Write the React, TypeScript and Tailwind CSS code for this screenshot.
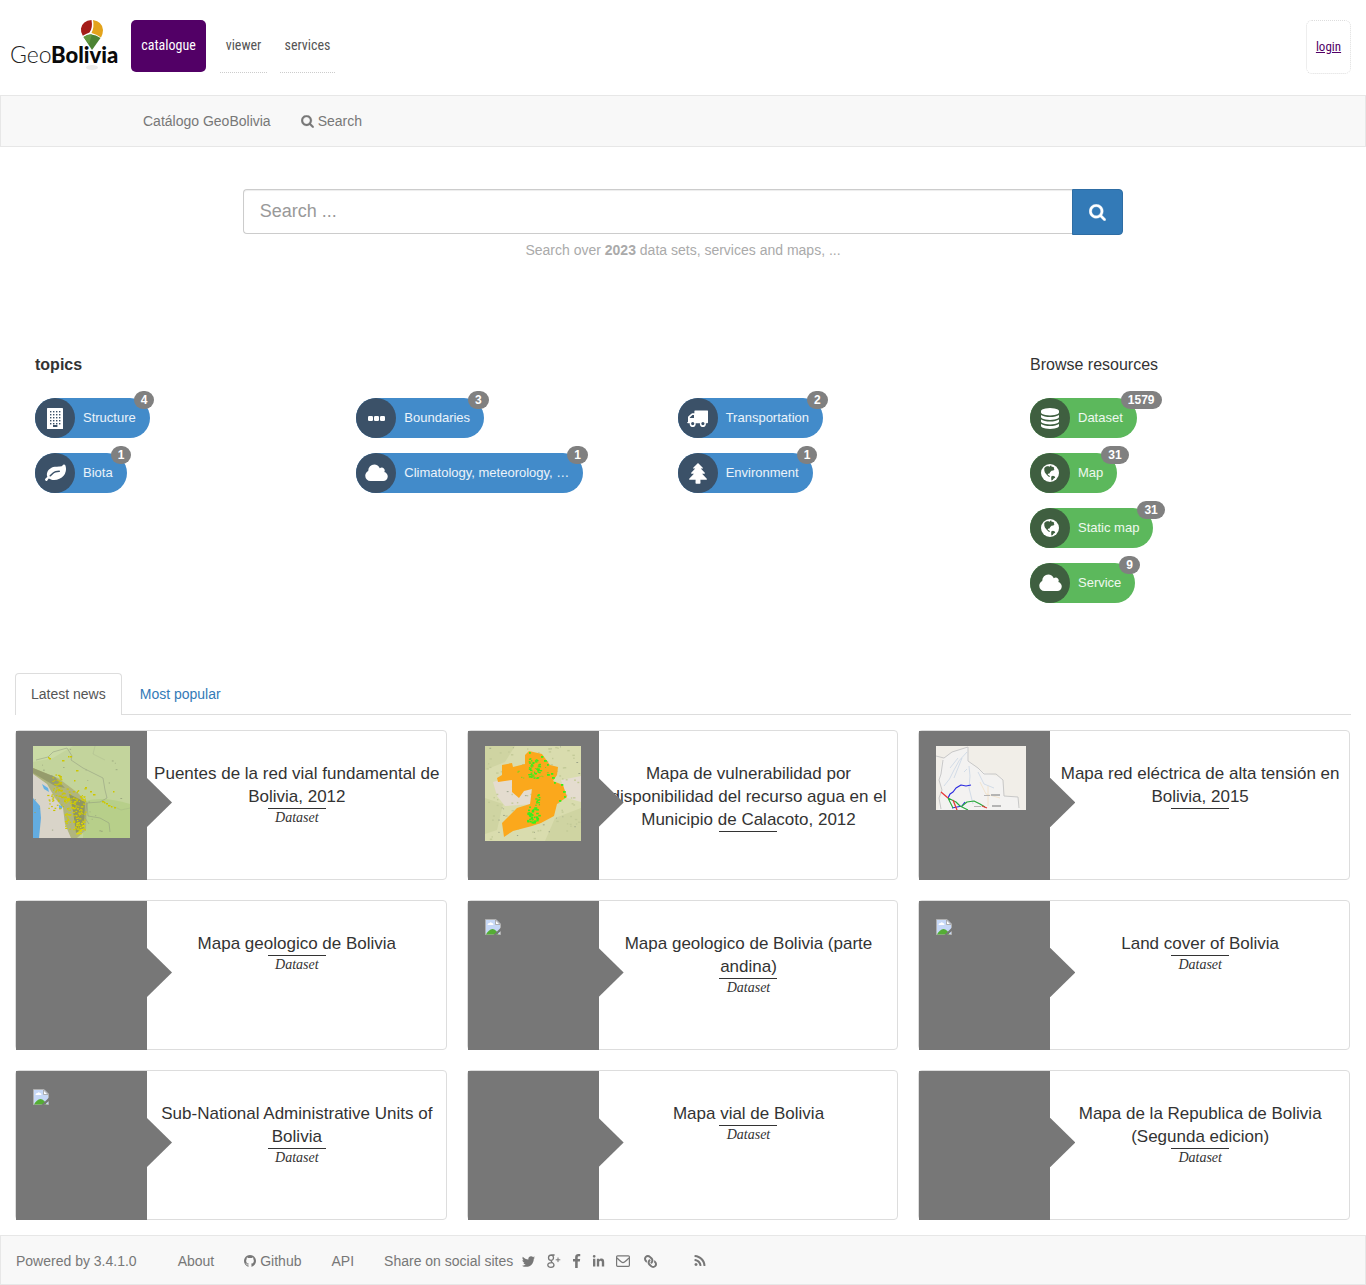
import React from "react";
import { FaLink, FaLinkedinIn } from "react-icons/fa";

const SANS = "font-['Liberation_Sans',Arial,sans-serif]";
const NARROW = "font-['Liberation_Sans_Narrow','Roboto_Condensed','Liberation_Sans',sans-serif]";

type IconProps = { className?: string };

function Glyph({ d, x = 0, w = 1792, className }: { d: string; x?: number; w?: number; className?: string }) {
  return (
    <svg viewBox={`${x} 0 ${w} 1792`} fill="currentColor" aria-hidden="true" className={className}>
      <path d={d} />
    </svg>
  );
}

const P = {
  search:
    "M1216 832q0-185-131.5-316.5t-316.5-131.5-316.5 131.5-131.5 316.5 131.5 316.5 316.5 131.5 316.5-131.5 131.5-316.5zm512 832q0 52-38 90t-90 38q-54 0-90-38l-343-342q-179 124-399 124-143 0-273.5-55.5t-225-150-150-225-55.5-273.5 55.5-273.5 150-225 225-150 273.5-55.5 273.5 55.5 225 150 150 225 55.5 273.5q0 220-124 399l343 343q37 37 37 90z",
  twitter:
    "M1684 408q-67 98-162 167 1 14 1 42 0 130-38 259.5t-115.5 248.5-184.5 210.5-258 146-323 54.5q-271 0-496-145 35 4 78 4 225 0 401-138-105-2-188-64.5t-114-159.5q33 5 61 5 43 0 85-11-112-23-185.5-111.5t-73.5-205.5v-4q68 38 146 41-66-44-105-115t-39-154q0-88 44-163 121 149 294.5 238.5t371.5 99.5q-8-38-8-74 0-134 94.5-228.5t228.5-94.5q140 0 236 102 109-21 205-78-37 115-142 178 93-10 186-50z",
  cloud:
    "M1984 1152q0 159-112.5 271.5t-271.5 112.5h-1088q-185 0-316.5-131.5t-131.5-316.5q0-132 71-241.5t187-163.5q-2-28-2-43 0-212 150-362t362-150q158 0 286.5 88t187.5 230q70-62 166-62 106 0 181 75t75 181q0 75-41 138 129 30 213 134.5t84 239.5z",
  facebook:
    "M1343 12v264h-157q-86 0-116 36t-30 108v189h293l-39 296h-254v759h-306v-759h-255v-296h255v-218q0-186 104-288.5t277-102.5q147 0 228 12z",
  rss: "M576 1344q0 80-56 136t-136 56-136-56-56-136 56-136 136-56 136 56 56 136zm512 123q2 28-17 48-18 21-47 21h-135q-25 0-43-16.5t-20-41.5q-22-229-184.5-391.5t-391.5-184.5q-25-2-41.5-20t-16.5-43v-135q0-29 21-47 17-17 43-17h5q160 13 306 80.5t259 181.5q114 113 181.5 259t80.5 306zm512 2q2 27-18 47-18 20-46 20h-143q-26 0-44.5-17.5t-19.5-42.5q-12-215-101-408.5t-231.5-336-336-231.5-408.5-102q-25-1-42.5-19.5t-17.5-43.5v-143q0-28 20-46 18-18 44-18h3q262 13 501.5 120t425.5 294q187 186 294 425.5t120 501.5z",
  database:
    "M896 768q237 0 443-43t325-127v170q0 69-103 128t-280 93.5-385 34.5-385-34.5-280-93.5-103-128v-170q119 84 325 127t443 43zm0 768q237 0 443-43t325-127v170q0 69-103 128t-280 93.5-385 34.5-385-34.5-280-93.5-103-128v-170q119 84 325 127t443 43zm0-384q237 0 443-43t325-127v170q0 69-103 128t-280 93.5-385 34.5-385-34.5-280-93.5-103-128v-170q119 84 325 127t443 43zm0-1152q208 0 385 34.5t280 93.5 103 128v128q0 69-103 128t-280 93.5-385 34.5-385-34.5-280-93.5-103-128v-128q0-69 103-128t280-93.5 385-34.5z",
  github:
    "M896 128q209 0 385.5 103t279.5 279.5 103 385.5q0 251-146.5 451.5t-378.5 277.5q-27 5-40-7t-13-30q0-3 .5-76.5t.5-134.5q0-97-52-142 57-6 102.5-18t94-39 81-66.5 53-105 20.5-150.5q0-119-79-206 37-91-8-204-28-9-81 11t-92 44l-38 24q-93-26-192-26t-192 26q-16-11-42.5-27t-83.5-38.5-85-13.5q-45 113-8 204-79 87-79 206 0 85 20.5 150t52.5 105 80.5 67 94 39 102.5 18q-39 36-49 103-21 10-45 15t-57 5-65.5-21.5-55.5-62.5q-19-32-48.5-52t-49.5-24l-20-3q-21 0-29 4.5t-5 11.5 9 14 13 12l7 5q22 10 43.5 38t31.5 51l10 23q13 38 44 61.5t67 30 69.5 7 55.5-3.5l23-4q0 38 .5 88.5t.5 54.5q0 18-13 30t-40 7q-232-77-378.5-277.5t-146.5-451.5q0-209 103-385.5t279.5-279.5 385.5-103z",
  leaf: "M1280 704q0-26-19-45t-45-19q-172 0-318 49.5t-259.5 134-235.5 219.5q-19 21-19 45 0 26 19 45t45 19q24 0 45-19 27-24 74-71t67-66q137-124 268.5-176t313.5-52q26 0 45-19t19-45zm512-198q0 95-20 193-46 224-184.5 383t-357.5 268q-214 108-438 108-148 0-286-47-15-5-88-42t-96-37q-16 0-39.5 32t-45 70-52.5 70-60 32q-43 0-63.5-17.5t-45.5-59.5q-2-4-6-11t-5.5-10-3-9.5-1.5-13.5q0-35 31-73.5t68-65.5 68-56 31-48q0-4-14-38t-16-44q-9-51-9-104 0-115 43.5-220t119-184.5 170.5-139 204-95.5q55-18 145-25.5t179.5-9 178.5-6 163.5-24 113.5-56.5l29.5-29.5 29.5-28 27-20 36.5-16 43.5-4.5q39 0 70.5 46t47.5 112 24 124 8 96z",
};

function SearchIcon({ className }: IconProps) {
  return (
    <svg viewBox="50 110 1692 1700" fill="currentColor" stroke="currentColor" strokeWidth="30" aria-hidden="true" className={className}>
      <path d={P.search} />
    </svg>
  );
}

function Building({ className }: IconProps) {
  const cols = [3, 6, 9, 12];
  const rows = [3, 6, 9, 12, 15];
  return (
    <svg viewBox="0 0 16 21" className={className} aria-hidden="true">
      <rect width="16" height="21" rx="0.6" fill="currentColor" />
      <g fill="#3b5168">
        {rows.map((y) => cols.map((x) => <rect key={`${x}-${y}`} x={x} y={y} width="1.4" height="1.4" />))}
        <rect x="6" y="17" width="4.4" height="2" />
      </g>
    </svg>
  );
}

function Dots({ className }: IconProps) {
  return (
    <svg viewBox="0 0 17 5" fill="currentColor" className={className} aria-hidden="true">
      <rect width="5" height="5" rx="1.2" />
      <rect x="6" width="5" height="5" rx="1.2" />
      <rect x="12" width="5" height="5" rx="1.2" />
    </svg>
  );
}

function Truck({ className }: IconProps) {
  return (
    <svg viewBox="0 0 21 17" className={className} aria-hidden="true">
      <path
        fill="currentColor"
        fillRule="evenodd"
        d="M8 .5h12.500q.5 0 .5.500V12.500q0 .8-.8.8h-1.400a3 3 0 1 1-5.800 0H8.600a3 3 0 1 1-5.800 0H1q-.9 0-.9-.7 0-.5.9-.5V7.400q0-.7.5-1.200L4.300 3.700q.5-.4 1.100-.4h2V1q0-.5.600-.5zM7 5H5.400L2.800 7.600V8H7zM5.700 12a1.600 1.600 0 1 0 0 3.200 1.600 1.600 0 0 0 0-3.200zm10.200 0a1.600 1.600 0 1 0 0 3.200 1.600 1.600 0 0 0 0-3.200z"
      />
    </svg>
  );
}

function Pine({ className }: IconProps) {
  return (
    <svg viewBox="0 0 18 21" className={className} aria-hidden="true">
      <path
        fill="currentColor"
        d="M9 0 4.200 4.800q-.5.700.4.700h1.600L2.200 9.800q-.5.900.4.900h2.300L.2 15.700q-.5 1 .5 1h5.900L6.500 20q0 .8.800.8h3.400q.8 0 .8-.8l-.1-3.300h5.900q1 0 .5-1l-4.700-5h2.300q.9 0 .4-.9l-4-4.300h1.600q.9 0 .4-.7z"
      />
    </svg>
  );
}

function Globe({ className }: IconProps) {
  return (
    <svg viewBox="0 0 18 18" className={className} aria-hidden="true">
      <circle cx="9" cy="9" r="9" fill="currentColor" />
      <path
        fill="#3f5f40"
        d="M3.300 3.900 5 2.500l2.400-.6.700 1 1.400-1.300 1.500.3-.8 1.200 1.700-.3 1.300.9-.4 1.500.8.600-1.500.8-1.600.2-1.400 1.500-.6 1.200-1.500.2-.2 1.400 1.200.2.800 1 .1.700-1.500-.5L5.500 10.600 3.900 8.600 3.300 6.500zM10.200 12.400l1.700-.6 1.900.7.400 1.300-1.500.8-1 1.500-1.300.5-.2-2z"
      />
    </svg>
  );
}

function GooglePlus({ className }: IconProps) {
  return (
    <svg viewBox="0 0 14 14" fill="none" stroke="currentColor" className={className} aria-hidden="true">
      <path
        strokeWidth="1.300"
        d="M7.600 1H4.700C2.800 1 1.500 2.200 1.500 3.800S2.700 6.400 4.100 6.400 6.500 5.300 6.500 3.800 5.700 1.200 4.700 1M4.500 6.400c-.6.800-.3 1.300.5 1.900 1 .7 2 1.300 2 2.600 0 1.500-1.300 2.400-3.100 2.400S.8 12.500.8 11.100 2.200 8.700 5 8.600"
      />
      <path strokeWidth="1" d="M11 3.500v4.600M8.700 5.800h4.600" />
    </svg>
  );
}

function Envelope({ className }: IconProps) {
  return (
    <svg viewBox="0 0 14 12" fill="none" stroke="currentColor" strokeWidth="1.200" className={className} aria-hidden="true">
      <rect x=".6" y=".8" width="12.800" height="10.500" rx="1" />
      <path d="M1 3q2 2 4.500 4Q7 8.300 8.500 7 11 5 13 3" />
    </svg>
  );
}

function Logo() {
  return (
    <svg viewBox="0 0 108 54" className="h-[54px] w-[108px]" role="img" aria-label="GeoBolivia">
      <ellipse cx="82" cy="49.500" rx="6" ry="2.500" fill="#ececec" />
      <path d="M81.500 2Q83 10 79.500 14.500 76 16 72.800 17.800 70.500 14 71 10.500 72.500 2.500 81.500 2z" fill="#a51c18" />
      <path d="M83 2Q92.500 3.500 93 12q0 3.500-2 7.500-4.500-3.500-9.500-4.500Q84.500 9 83 2z" fill="#e3a31b" />
      <g fontFamily="Lato, sans-serif">
        <text x="0" y="45" fontSize="23" fontWeight="300" fill="#222">Geo</text>
        <text x="41" y="45" fontSize="22" fontWeight="900" fill="#0a0a0a">Bolivia</text>
      </g>
      <path d="M82 32 73.500 19Q82 13.500 90.500 20z" fill="#4c8333" />
      <path d="M79 26 73.500 19Q78 15.500 82 16.500z" fill="#63993f" />
    </svg>
  );
}

function scatter(seed: number, n: number, x: number, y: number, w: number, h: number): [number, number][] {
  let s = seed;
  const next = () => {
    s = (s * 16807) % 2147483647;
    return s / 2147483647;
  };
  return Array.from({ length: n }, () => [x + next() * w, y + next() * h]);
}

function Specks({ pts, fill, size = 1.2 }: { pts: [number, number][]; fill: string; size?: number }) {
  return (
    <g fill={fill}>
      {pts.map(([x, y], i) => (
        <rect key={i} x={x} y={y} width={size + (i % 3) * 0.5} height={size} />
      ))}
    </g>
  );
}

function BridgesMap() {
  return (
    <svg viewBox="0 0 97 92" className="block h-[92px] w-[97px]" role="img" aria-label="Puentes de la red vial">
      <rect width="97" height="92" fill="#c3d49c" />
      <path d="M52 55Q70 50 97 58V92H50z" fill="#b7cf8a" />
      <path d="M0 0h40L20 12 0 16z" fill="#cbdba6" />
      <path d="M0 22 25 32 45 47 54 56 53 84 44 92H26L20 58 0 34z" fill="#b0b57e" />
      <path d="M0 22 22 31 32 42 22 40 0 27z" fill="#969c6c" />
      <path d="M36 48 52 56 51 82 43 87 40 65z" fill="#8f9661" />
      <path d="M0 28 14 38 22 52 30 62 32 78 38 92H0z" fill="#d9d4c9" />
      <path d="M0 52 7 60 8 72 6 92H0z" fill="#63ace0" />
      <path d="M9 38 15 42 16 46 11 43zM26 59l3 1v3l-3-1z" fill="#65b1e3" />
      <g fill="none" stroke="#8d967e" strokeWidth=".5">
        <path d="M3 14 15 11 20 6 34 2 39 10 38 14 50 22 60 27 70 32 72 44 74 52 67 56 54 57 52 72 56 78M54 57 55 70 67 72 76 77 77 86" />
        <path d="M62 0 60 8 72 14M80 60 88 64 97 62" strokeOpacity=".4" />
      </g>
      <Specks pts={scatter(7007, 24, 1, 2, 90, 88)} fill="#95a07a" size={0.8} />
      <Specks pts={scatter(120012, 30, 19, 28, 9, 18)} fill="#cdc700" />
      <Specks pts={scatter(330033, 40, 14, 42, 38, 14)} fill="#cdc700" />
      <Specks pts={scatter(510051, 110, 31, 50, 21, 34)} fill="#d3cd00" />
      <Specks pts={scatter(770077, 22, 43, 74, 7, 14)} fill="#e0da00" />
      <Specks pts={scatter(910091, 16, 14, 48, 18, 18)} fill="#c9c400" />
      <Specks
        pts={[[15, 11], [16, 12], [29, 14], [35, 10], [37, 10], [43, 24], [41, 34], [57, 45], [60, 48], [80, 45], [52, 41], [69, 55], [71, 56], [73, 57], [75, 59], [78, 60], [81, 61]]}
        fill="#cdc700"
        size={1.5}
      />
    </svg>
  );
}

function WaterMap() {
  return (
    <svg viewBox="0 0 96 95" className="block h-[95px] w-[96px]" role="img" aria-label="Mapa de vulnerabilidad">
      <rect width="96" height="95" fill="#d9dcae" />
      <path d="M0 0h30L20 16 0 24zM70 72l26-10v33H60zM0 52l18 6-6 26-12 4z" fill="#cfd4a2" />
      <path d="M8 36 30 30 46 42 48 58 20 60 12 50zM76 34l20-4v26l-14-4z" fill="#e4dccf" />
      <Specks pts={scatter(500005, 110, 0, 0, 94, 93)} fill="#c3ca98" size={1.4} />
      <Specks pts={scatter(450045, 26, 0, 0, 94, 93)} fill="#8f9880" size={0.8} />
      <path
        d="M17 19 27 17 28 21 40 18 40 9 44 5 57 8 65 19 73 21 72 29 68 35 78 39 82 51 72 58 69 70 56 77 47 80 28 85 19 91 17 77 32 62 45 58 47 43 39 45 34 52 27 46 27 34 13 36 12 32 17 29z"
        fill="#fba81c"
      />
      <Specks pts={scatter(190019, 50, 43, 12, 12, 20)} fill="#35f01c" size={1.3} />
      <Specks pts={scatter(230023, 42, 42, 60, 12, 16)} fill="#35f01c" size={1.6} />
      <Specks pts={scatter(610061, 12, 50, 48, 4, 12)} fill="#35f01c" size={1.3} />
      <Specks pts={scatter(830083, 16, 32, 20, 30, 16)} fill="#7ed41c" size={1} />
      <Specks
        pts={[[44, 6], [56, 10], [59, 14], [62, 18], [66, 27], [67, 31], [69, 36], [76, 38], [78, 45], [79, 50], [74, 54], [62, 28]]}
        fill="#35f01c"
        size={1.8}
      />
    </svg>
  );
}

function PowerMap() {
  return (
    <svg viewBox="0 0 90 64" className="block h-[64px] w-[90px]" role="img" aria-label="Mapa red eléctrica">
      <rect width="90" height="64" fill="#f1eee8" />
      <path d="M6 14 16 6 32 1 33 16 47 26 66 32 68 50 82 51 84 64H2L6 46 3 30z" fill="#f3f2f1" />
      <g fill="none" strokeLinejoin="round">
        <path d="M0 10 8 12 16 6 32 1 32 15 42 22 48 28 60 28 67 34 68 50 82 51 83 62M7 14 5 28 3 34 6 44 3 52 5 63" stroke="#c8c8c8" />
        <path d="M31 6Q22 14 18 24T8 40M33 20 34 30 33 42 37 58M22 12 14 22M42 26l6 12 10 4M28 26l3-3M26 12l-8 20" stroke="#c9d6e4" strokeWidth=".8" />
        <path d="M44 36 50 48 64 52M52 40v20" stroke="#f1dfc4" strokeWidth=".8" />
        <path d="M35 39 30 40 25 39 20 42 17 46 14 48 12 52M16 62 26 60 29 56" stroke="#2a2ae0" strokeWidth="1.200" />
        <path d="M12 52 20 56 24 60 32 64M26 60 31 56 38 55 44 58 49 61M12 52l5 10" stroke="#27a83a" strokeWidth="1.100" />
        <path d="M5 46 12 52M17 54l4 10M46 60l5 2" stroke="#e8383a" strokeWidth="1.300" />
      </g>
      <path d="M48 49h6v1h-6zM55 48h9v2h-9zM56 59h9v2h-9zM38 60h7v1h-7z" fill="#b4b4b4" />
    </svg>
  );
}

function BrokenImage() {
  return (
    <svg viewBox="0 0 16 16" className="mt-[3px] block size-4" aria-hidden="true">
      <path d="M.5.500H11L15.500 5v10.500H.5z" fill="#c6d8f7" stroke="#b0b0b0" />
      <path d="M1 15.500Q3.500 10.500 7.500 10q4 .5 6 5.500z" fill="#55ad35" />
      <path d="M2.500 6q0-2 2-2 1-1.500 2.500 0 1.500.2 1.500 2z" fill="#fff" />
      <path d="M10.500 1v4.500H15z" fill="#fff" stroke="#a0a0a0" strokeWidth=".8" />
      <path d="M16 8.500 8.500 16H11l5-4z" fill="#777" />
    </svg>
  );
}

type PillData = { label: string; count: number; icon: React.ReactNode };

function Pill({ label, count, icon, green }: PillData & { green?: boolean }) {
  return (
    <a
      href="#"
      className={`relative flex h-10 w-fit items-center rounded-full pr-3.5 text-[13px] text-white/90 ${green ? "bg-[#5cb85c]" : "bg-[#428bca]"}`}
    >
      <span className={`flex size-10 shrink-0 items-center justify-center rounded-full text-white ${green ? "bg-[#3f5f40]" : "bg-[#3b5168]"}`}>
        {icon}
      </span>
      <span className="ml-2 whitespace-nowrap">{label}</span>
      <span className="absolute -top-[7px] left-full -ml-4 rounded-[10px] bg-[#808080] px-[7px] text-xs leading-[18px] font-bold text-white">
        {count}
      </span>
    </a>
  );
}

const cloud = <Glyph d={P.cloud} x={64} w={1920} className="h-[21px] w-[23px]" />;

const topics: PillData[] = [
  { label: "Structure", count: 4, icon: <Building className="h-[21px] w-4" /> },
  { label: "Boundaries", count: 3, icon: <Dots className="h-[5px] w-[17px]" /> },
  { label: "Transportation", count: 2, icon: <Truck className="h-[17px] w-[21px]" /> },
  { label: "Biota", count: 1, icon: <Glyph d={P.leaf} className="size-[21px]" /> },
  { label: "Climatology, meteorology, …", count: 1, icon: cloud },
  { label: "Environment", count: 1, icon: <Pine className="h-[21px] w-[18px]" /> },
];

const resources: PillData[] = [
  { label: "Dataset", count: 1579, icon: <Glyph d={P.database} x={128} w={1536} className="h-[21px] w-[18px]" /> },
  { label: "Map", count: 31, icon: <Globe className="size-[18px]" /> },
  { label: "Static map", count: 31, icon: <Globe className="size-[18px]" /> },
  { label: "Service", count: 9, icon: cloud },
];

type CardData = { title: string; type?: string; thumb?: React.ReactNode };

const cards: CardData[] = [
  { title: "Puentes de la red vial fundamental de Bolivia, 2012", type: "Dataset", thumb: <BridgesMap /> },
  { title: "Mapa de vulnerabilidad por disponibilidad del recurso agua en el Municipio de Calacoto, 2012", thumb: <WaterMap /> },
  { title: "Mapa red eléctrica de alta tensión en Bolivia, 2015", thumb: <PowerMap /> },
  { title: "Mapa geologico de Bolivia", type: "Dataset" },
  { title: "Mapa geologico de Bolivia (parte andina)", type: "Dataset", thumb: <BrokenImage /> },
  { title: "Land cover of Bolivia", type: "Dataset", thumb: <BrokenImage /> },
  { title: "Sub-National Administrative Units of Bolivia", type: "Dataset", thumb: <BrokenImage /> },
  { title: "Mapa vial de Bolivia", type: "Dataset" },
  { title: "Mapa de la Republica de Bolivia (Segunda edicion)", type: "Dataset" },
];

function Card({ title, type, thumb }: CardData) {
  return (
    <li className="flex min-h-[150px] rounded border border-[#ddd]">
      <div className="relative -mb-px w-[131px] shrink-0 bg-[#777] pt-[15px] pl-[17px]">
        {thumb}
        <span className="absolute top-[47px] left-full z-10 -ml-0.5 h-[49px] w-[27px] bg-[#777] [clip-path:polygon(0_0,2px_0,100%_50%,2px_100%,0_100%)]" />
      </div>
      <a href="#" className="block min-w-0 flex-1 pt-[31px] pr-1 pl-[5px] text-center text-[#333]">
        <h2 className="text-[17px] leading-[23px]">{title}</h2>
        <div className="mx-auto w-[58px] border-t border-[#333]" />
        {type && (
          <span className="block font-['Liberation_Serif',serif] text-sm leading-[18px] italic">{type}</span>
        )}
      </a>
    </li>
  );
}

export default function App() {
  return (
    <div className={`bg-white text-sm text-[#333] ${SANS}`}>
      <header className={`flex h-[95px] items-start justify-between pt-5 pr-[15px] pl-2.5 ${NARROW}`}>
        <div className="flex items-start">
          <a href="#" className="-mt-0.5 mr-[13px]">
            <Logo />
          </a>
          <nav className="flex items-start text-sm leading-[50px] text-[#555]">
            <a href="#" className="mr-3.5 h-[52px] w-[75px] rounded-[5px] bg-[#520066] text-center text-white">catalogue</a>
            <a href="#" className="mr-[13px] h-[53px] w-[47px] border-b border-dotted border-[#ccc] text-center">viewer</a>
            <a href="#" className="h-[53px] w-[55px] border-b border-dotted border-[#ccc] text-center">services</a>
          </nav>
        </div>
        <a href="#" className="h-[54px] w-[45px] rounded-md border border-dotted border-[#ddd] text-center text-[13px] leading-[51px] text-[#520066] underline">
          login
        </a>
      </header>

      <nav className="flex h-[52px] items-center gap-[30px] border border-[#e7e7e7] bg-[#f8f8f8] pl-[142px] text-[#777]">
        <a href="#">Catálogo GeoBolivia</a>
        <a href="#" className="flex items-center gap-1">
          <SearchIcon className="size-[13px]" />
          Search
        </a>
      </nav>

      <main className="px-[15px]">
        <section className="-mx-[15px] pt-[42px]">
          <div className="mx-auto w-2/3 px-[15px]">
            <form className="flex" onSubmit={(e) => e.preventDefault()}>
              <input
                type="text"
                aria-label="Search"
                placeholder="Search ..."
                className="h-[45px] min-w-0 flex-1 rounded-l border border-r-0 border-[#ccc] px-4 text-lg shadow-[inset_0_1px_1px_rgba(0,0,0,0.075)] outline-none placeholder:text-[#999]"
              />
              <button
                type="submit"
                aria-label="Search"
                className="flex h-[46px] w-[51px] items-center justify-center rounded-r border border-[#2e6da4] bg-[#337ab7] text-white"
              >
                <SearchIcon className="size-[17px]" />
              </button>
            </form>
            <p className="mt-[5px] text-center leading-5 text-[#aaa]">
              Search over <b>2023</b> data sets, services and maps, ...
            </p>
          </div>
        </section>

        <div className="mt-[95px] flex">
          <section className="w-3/4 pr-[18px] pl-5">
            <h2 className="text-base leading-5 font-bold">topics</h2>
            <div className="mt-[23px] grid grid-cols-3 gap-y-[15px]">
              {topics.map((t) => (
                <Pill key={t.label} {...t} />
              ))}
            </div>
          </section>
          <section className="w-1/4 pl-[13px]">
            <h2 className="text-base leading-5">Browse resources</h2>
            <div className="mt-[23px] grid gap-y-[15px]">
              {resources.map((t) => (
                <Pill key={t.label} {...t} green />
              ))}
            </div>
          </section>
        </div>

        <div role="tablist" className="mt-[70px] flex border-b border-[#ddd]">
          <button role="tab" aria-selected="true" className="-mb-px h-[42px] rounded-t border border-b-0 border-[#ddd] bg-white px-[15px] pb-0.5 text-[#555]">
            Latest news
          </button>
          <button role="tab" aria-selected="false" className="ml-0.5 px-4 text-[#337ab7]">
            Most popular
          </button>
        </div>

        <ul className="mt-[15px] mr-px grid grid-cols-3 gap-5">
          {cards.map((c) => (
            <Card key={c.title} {...c} />
          ))}
        </ul>
      </main>

      <footer className="mt-[15px] flex h-[50px] items-center border border-[#e7e7e7] bg-[#f8f8f8] pt-0.5 pl-[15px] text-[#777]">
        <span className="mr-[41px]">Powered by 3.4.1.0</span>
        <nav className="flex items-center gap-[30px]">
          <a href="#">About</a>
          <a href="#" className="flex items-center gap-1">
            <Glyph d={P.github} x={128} w={1536} className="h-3.5 w-3" />
            Github
          </a>
          <a href="#">API</a>
          <span>Share on social sites</span>
        </nav>
        <div className="ml-2 flex items-center">
          <a href="#" aria-label="Twitter" className="mr-[11px]"><Glyph d={P.twitter} className="size-[15px]" /></a>
          <a href="#" aria-label="Google Plus" className="mr-2"><GooglePlus className="size-[14px]" /></a>
          <a href="#" aria-label="Facebook" className="mr-2"><Glyph d={P.facebook} className="size-[15px]" /></a>
          <a href="#" aria-label="LinkedIn" className="mr-[11px]"><FaLinkedinIn className="size-[13px]" /></a>
          <a href="#" aria-label="Email" className="mr-3.5"><Envelope className="h-3 w-3.5" /></a>
          <a href="#" aria-label="Permalink" className="mr-9"><FaLink className="size-[13px] -scale-x-100" /></a>
          <a href="#" aria-label="RSS"><Glyph d={P.rss} className="size-[14px]" /></a>
        </div>
      </footer>
    </div>
  );
}
